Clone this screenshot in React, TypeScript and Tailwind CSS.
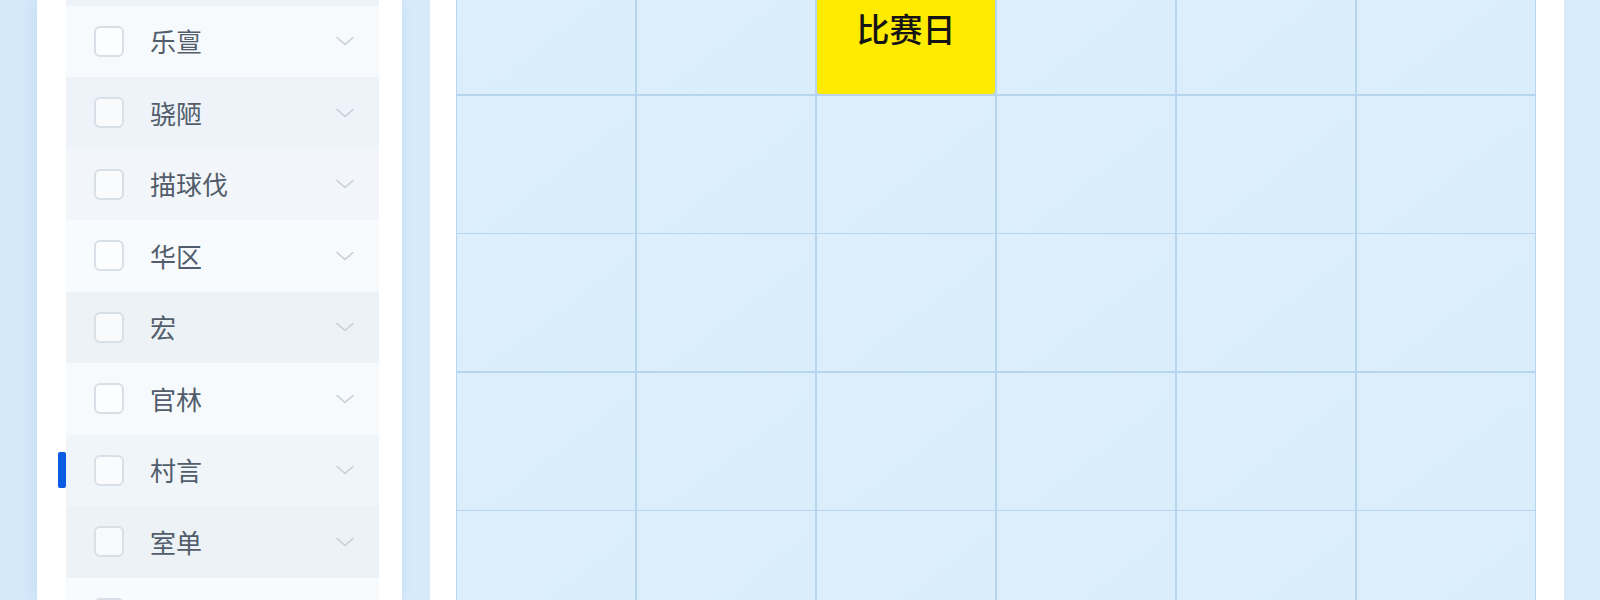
import React from "react";

const CJK = "font-['Noto_Sans_CJK_SC','Noto_Sans',sans-serif]";

type Row = { label: string; tint: string; active?: boolean };

// 第一行只露出底边，列表整体往上推
const rows: Row[] = [
  { label: "", tint: "bg-[#edf3f8]" },
  { label: "乐亶", tint: "bg-[#f7fafc]" },
  { label: "骁陋", tint: "bg-[#edf3f8]" },
  { label: "描球伐", tint: "bg-[#f2f6fa]" },
  { label: "华区", tint: "bg-[#f8fbfd]" },
  { label: "宏", tint: "bg-[#edf2f7]" },
  { label: "官林", tint: "bg-[#f7fafc]" },
  { label: "村言", tint: "bg-[#f0f5f9]", active: true },
  { label: "室单", tint: "bg-[#edf2f7]" },
  { label: "", tint: "bg-[#f8fbfd]" },
];

const Chevron = () => (
  <svg width="18" height="10" viewBox="0 0 18 10" fill="none">
    <path d="M1 1.5 L9 8.5 L17 1.5" stroke="#c6ced8" strokeWidth="1.6" strokeLinecap="round" strokeLinejoin="round" />
  </svg>
);

const SidebarRow = ({ row }: { row: Row }) => (
  <div className={`relative flex h-[71.5px] items-center pl-[28px] pr-[25px] ${row.tint}`}>
    {row.active && (
      <span className="absolute left-[-8px] top-1/2 h-[36px] w-[8px] -translate-y-1/2 rounded-[2px] bg-[#0b5be3]" />
    )}
    <span className="h-[31px] w-[30px] shrink-0 rounded-[6px] border-2 border-[#d9dfe6] bg-white/60" />
    <span className={`ml-[26px] flex-1 text-[26px] leading-none text-[#525d6b] ${CJK}`}>{row.label}</span>
    <Chevron />
  </div>
);

const COLS = 6;
const GRID_ROWS = 5;

const App = () => {
  const cells = Array.from({ length: COLS * GRID_ROWS }, (_, i) => i);
  return (
    <div className="flex h-[600px] w-[1600px] overflow-hidden bg-gradient-to-r from-[#d3e8f9] via-[#dcedfb] to-[#d8ebfb]">
      <div className="ml-[37px] h-full w-[365px] shrink-0 overflow-hidden bg-white pl-[29px] pr-[23px] shadow-[0_0_12px_rgba(160,200,235,0.35)]">
        <div className="-mt-[66px] flex flex-col">
          {rows.map((row, index) => (
            <SidebarRow key={index} row={row} />
          ))}
        </div>
      </div>

      <div className="ml-[28px] h-full w-[1134px] shrink-0 overflow-hidden bg-white pl-[26px] pr-[28px]">
        <div className="-mt-[44px] grid w-[1080px] grid-cols-6 gap-[1.5px] border-[1.5px] border-[#b7d5ec] bg-[#b7d5ec]">
          {cells.map((i) =>
            i === 2 ? (
              <div
                key={i}
                className={`flex h-[137px] items-center justify-center rounded-b-[4px] bg-[#ffeb00] pt-[6px] text-[33px] font-medium leading-none text-[#141414] ${CJK}`}
              >
                比赛日
              </div>
            ) : (
              <div key={i} className="h-[137px] bg-gradient-to-br from-[#ddeffc] to-[#daedfb]" />
            )
          )}
        </div>
      </div>
    </div>
  );
};

export default App;
